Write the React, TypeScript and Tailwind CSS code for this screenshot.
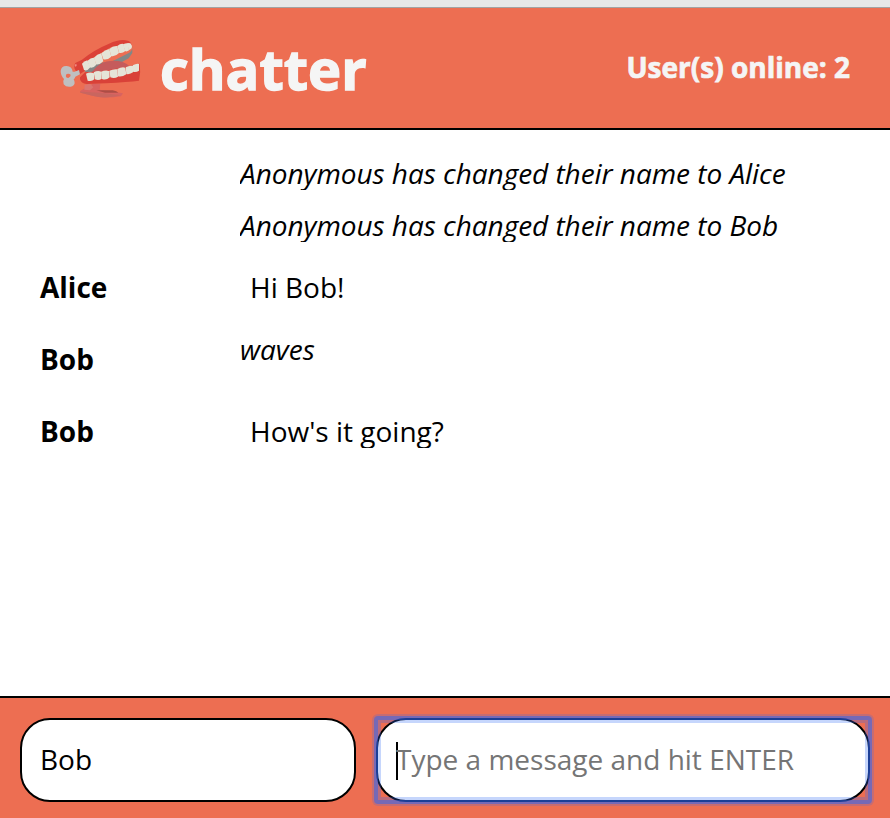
import React from "react";

type Message = { user?: string; text: string; action?: boolean };

const messages: Message[] = [
  { text: "Anonymous has changed their name to Alice", action: true },
  { text: "Anonymous has changed their name to Bob", action: true },
  { user: "Alice", text: "Hi Bob!" },
  { user: "Bob", text: "waves", action: true },
  { user: "Bob", text: "How's it going?" },
];

function Teeth() {
  return (
    <svg className="h-[75px] w-[100px] shrink-0" viewBox="0 0 300 225">
      <path d="M90 181 C103 169 122 171 128 157 L151 158 L149 176 L219 187 L213 196 Q168 203 134 196 L92 185Z" fill="#d96360" />
      <path d="M91 182 L151 185 L213 193 Q164 205 127 194 L91 185Z" fill="#c9665f" />
      <path d="M139 178 L188 178 Q201 180 205 185 L165 185Z" fill="#ad4d45" />
      <path d="M104 162 L121 158 L130 169 L120 178 L103 176Z" fill="#db7670" />
      <path d="M101 119 Q128 96 187 91 L238 65 Q250 55 247 45 L247 66 L236 82 L217 92 L160 108 L119 128Z" fill="#828786" />
      <path d="M125 124 Q146 90 190 89 Q222 89 238 105 L181 120Z" fill="#c55b5c" />
      <path d="M89 130 L77 119 Q69 107 76 96 L96 86 Q131 57 177 38 Q211 22 234 29 Q244 33 245 43 L231 38 L182 49 L107 94 L105 119Z" fill="#db4238" />
      <path d="M90 139 L105 124 Q181 120 269 98 Q273 123 267 149 Q235 153 167 157 L110 159 Q93 157 90 145Z" fill="#d94138" />
      <path d="M74 101 L79 98 L80 105 L75 107Z" fill="#f18a80" />
      <g fill="#e5e4d7">
        <path d="M96 98 Q102 90 112 88 L121 109 Q111 122 102 117Z" />
        <path d="M112 90 Q121 80 133 80 L139 101 Q129 113 119 109Z" />
        <path d="M132 80 Q141 69 154 67 L160 91 Q149 102 138 100Z" />
        <path d="M154 67 Q165 57 178 54 L184 77 Q172 88 160 85Z" />
        <path d="M178 54 Q188 44 202 45 L207 66 Q196 78 183 75Z" />
        <path d="M202 45 Q212 37 220 39 L226 60 Q216 69 207 65Z" />
        <path d="M219 40 Q230 35 234 37 L237 58 Q230 63 225 60Z" />
        <path d="M232 37 Q242 33 245 43 Q249 53 236 58Z" />
        <path d="M108 128 Q120 122 132 127 L133 145 Q125 153 113 149Z" />
        <path d="M131 124 Q143 117 154 122 L155 143 Q146 150 135 145Z" />
        <path d="M153 122 Q166 116 178 120 L179 139 Q169 149 156 144Z" />
        <path d="M178 119 Q190 113 202 115 L204 137 Q193 144 181 139Z" />
        <path d="M202 114 Q215 107 226 110 L229 130 Q216 139 204 136Z" />
        <path d="M227 109 Q238 103 249 105 L249 124 Q240 131 229 129Z" />
        <path d="M248 103 Q259 97 267 99 L267 119 Q258 125 249 122Z" />
      </g>
      <path fillRule="evenodd" d="M74 122 L87 117 L90 130 L76 137 Q74 143 71 145 Q79 159 67 166 Q50 171 41 160 Q37 151 42 144 Q32 134 32 120 Q34 104 50 105 Q66 106 68 122Z M48 132 Q46 141 55 141 Q63 137 62 131 Q57 126 50 129Z" fill="#bfbfc0" />
    </svg>
  );
}

export default function App() {
  return (
    <div className="flex h-[818px] w-[890px] flex-col overflow-hidden bg-white font-['Open_Sans',sans-serif] text-[28px] text-black">
      <div className="h-2 shrink-0 border-b border-[#a2a2a2] bg-[#e7e7e7]" />
      <header className="flex h-[122px] shrink-0 items-center justify-between border-b-2 border-black bg-[#ed6e52] pr-10 pl-[50px] text-[#f5f5f5]">
        <div className="flex items-center gap-[10px]">
          <Teeth />
          <h1 className="text-[56px] leading-[76px] font-bold [-webkit-text-stroke:1.4px_#f5f5f5]">chatter</h1>
        </div>
        <div className="pb-[2px] font-bold [-webkit-text-stroke:0.7px_#f5f5f5]">User(s) online: 2</div>
      </header>
      <main className="flex h-[566px] shrink-0 flex-col px-10 pt-[26px]">
        {messages.map((m, i) =>
          m.user ? (
            <div key={i} className="mb-[10px] flex h-[62px] items-start">
              <div className="w-[200px] pt-[10px] leading-[34px] font-bold">{m.user}</div>
              {m.action ? (
                <div className="overflow-hidden leading-[34px] italic">{m.text}</div>
              ) : (
                <div className="overflow-hidden px-[10px] pt-[10px] leading-[34px]">{m.text}</div>
              )}
            </div>
          ) : (
            <div key={i} className="mb-[18px] ml-[200px] h-[34px] overflow-hidden leading-[34px] tracking-[-0.04px] italic">{m.text}</div>
          ),
        )}
      </main>
      <footer className="flex h-[122px] shrink-0 gap-5 border-t-2 border-black bg-[#ed6e52] p-5">
        <div className="flex h-[84px] w-[336px] items-center rounded-[30px] border-2 border-black bg-white px-[18px] pb-[2px]">Bob</div>
        <div className="relative flex h-[84px] w-[494px] items-center rounded-[30px] border-2 border-black bg-white px-[18px] text-[#757575]">
          <span className="mt-[2px] mr-[-2px] h-[38px] w-[2px] bg-black" />
          <span className="pb-[2px]">Type a message and hit ENTER</span>
          <span className="absolute -inset-1 rounded-[4px] border-4 border-[#2d66f3]/62 shadow-[0_0_0_2px_rgba(45,102,243,0.2),inset_0_0_0_3px_rgba(45,102,243,0.27)]" />
        </div>
      </footer>
    </div>
  );
}
